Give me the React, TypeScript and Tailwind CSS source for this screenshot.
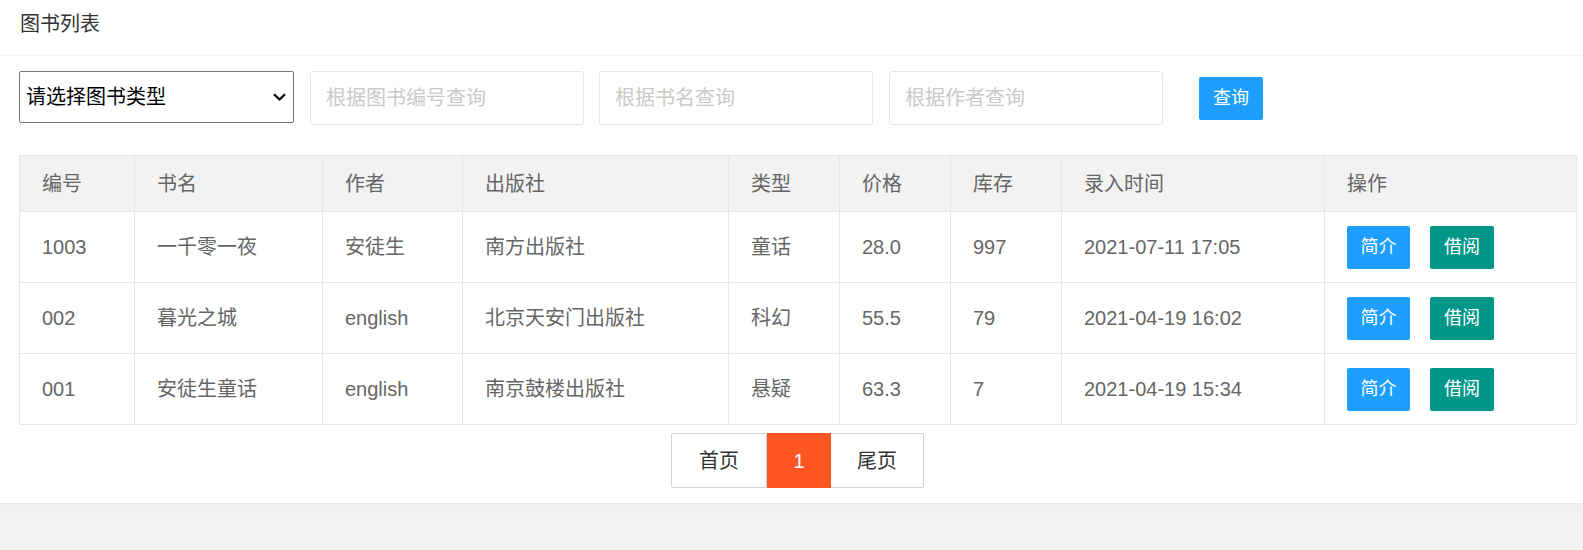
import React from "react"

const font = { fontFamily: '"Liberation Sans", "Noto Sans CJK SC", sans-serif' }

interface Book {
  id: string
  name: string
  author: string
  publisher: string
  type: string
  price: string
  stock: string
  time: string
}

const books: Book[] = [
  { id: "1003", name: "一千零一夜", author: "安徒生", publisher: "南方出版社", type: "童话", price: "28.0", stock: "997", time: "2021-07-11 17:05" },
  { id: "002", name: "暮光之城", author: "english", publisher: "北京天安门出版社", type: "科幻", price: "55.5", stock: "79", time: "2021-04-19 16:02" },
  { id: "001", name: "安徒生童话", author: "english", publisher: "南京鼓楼出版社", type: "悬疑", price: "63.3", stock: "7", time: "2021-04-19 15:34" },
]

const columns = ["编号", "书名", "作者", "出版社", "类型", "价格", "库存", "录入时间", "操作"]
const widths = ["w-[115px]", "w-[188px]", "w-[140px]", "w-[266px]", "w-[111px]", "w-[111px]", "w-[111px]", "w-[263px]", "w-[252px]"]

export default function App() {
  return (
    <div className="min-h-[550px] bg-[#f2f2f2]" style={font}>
      <div className="bg-white shadow-[0_1px_2px_0_rgba(0,0,0,0.05)]">
        <div className="h-[56px] border-b border-[#f6f6f6] px-[20px] text-[20px] leading-[48px] text-[#333]">
          图书列表
        </div>

        <div className="pl-[19px] pr-[7px] pt-[15px] pb-[15px]">
          {/* search bar */}
          <div className="flex items-start">
            <div className="relative w-[275px] h-[52px]">
              <select className="w-full h-full appearance-none border border-[#767676] rounded-[2px] bg-white pl-[6px] text-[20px] text-black outline-none">
                <option>请选择图书类型</option>
                <option>童话</option>
                <option>科幻</option>
                <option>悬疑</option>
              </select>
              <svg className="pointer-events-none absolute right-[8px] top-[22px] w-[13px] h-[8px]" viewBox="0 0 13 8" fill="none">
                <path d="M1 1.2 L6.5 6.5 L12 1.2" stroke="#000" strokeWidth="2.2" />
              </svg>
            </div>
            <input
              placeholder="根据图书编号查询"
              className="ml-[16px] w-[274px] h-[54px] border border-[#e6e6e6] rounded-[3px] px-[15px] text-[20px] text-[#333] placeholder:text-[#c9c9c9] outline-none"
            />
            <input
              placeholder="根据书名查询"
              className="ml-[15px] w-[274px] h-[54px] border border-[#e6e6e6] rounded-[3px] px-[15px] text-[20px] text-[#333] placeholder:text-[#c9c9c9] outline-none"
            />
            <input
              placeholder="根据作者查询"
              className="ml-[16px] w-[274px] h-[54px] border border-[#e6e6e6] rounded-[3px] px-[15px] text-[20px] text-[#333] placeholder:text-[#c9c9c9] outline-none"
            />
            <button className="ml-[36px] mt-[6px] w-[64px] h-[43px] rounded-[2px] bg-[#1E9FFF] text-white text-[18px]">
              查询
            </button>
          </div>

          {/* table */}
          <table className="mt-[30px] w-[1557px] table-fixed border-collapse text-[20px] text-[#666]">
            <thead>
              <tr className="bg-[#f2f2f2]">
                {columns.map((c, i) => (
                  <th key={c} className={`${widths[i]} h-[56px] border border-[#e6e6e6] px-[22px] text-left font-normal`}>
                    {c}
                  </th>
                ))}
              </tr>
            </thead>
            <tbody>
              {books.map((b) => (
                <tr key={b.id}>
                  <td className="h-[71px] border border-[#e6e6e6] px-[22px]">{b.id}</td>
                  <td className="border border-[#e6e6e6] px-[22px]">{b.name}</td>
                  <td className="border border-[#e6e6e6] px-[22px]">{b.author}</td>
                  <td className="border border-[#e6e6e6] px-[22px]">{b.publisher}</td>
                  <td className="border border-[#e6e6e6] px-[22px]">{b.type}</td>
                  <td className="border border-[#e6e6e6] px-[22px]">{b.price}</td>
                  <td className="border border-[#e6e6e6] px-[22px]">{b.stock}</td>
                  <td className="border border-[#e6e6e6] px-[22px]">{b.time}</td>
                  <td className="border border-[#e6e6e6] px-[22px]">
                    <div className="flex gap-[20px]">
                      <button className="w-[63px] h-[43px] rounded-[2px] bg-[#1E9FFF] text-white text-[18px]">简介</button>
                      <button className="w-[64px] h-[43px] rounded-[2px] bg-[#009688] text-white text-[18px]">借阅</button>
                    </div>
                  </td>
                </tr>
              ))}
            </tbody>
          </table>

          {/* pagination */}
          <div className="mt-[8px] w-[1557px] flex justify-center">
            <div className="flex h-[55px] text-[20px] text-[#333]">
              <a className="w-[96px] flex items-center justify-center border border-[#d2d2d2] rounded-l-[2px] cursor-pointer">首页</a>
              <span className="w-[64px] flex items-center justify-center bg-[#FF5722] text-white">1</span>
              <a className="w-[93px] flex items-center justify-center border-y border-r border-[#d2d2d2] rounded-r-[2px] cursor-pointer">尾页</a>
            </div>
          </div>
        </div>
      </div>
    </div>
  )
}
